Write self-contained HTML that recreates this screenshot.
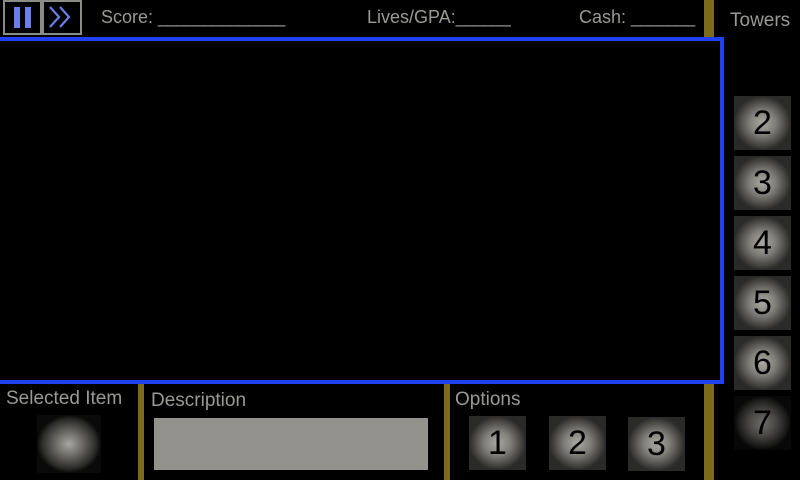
<!DOCTYPE html>
<html><head><style>
*{margin:0;padding:0;box-sizing:border-box}
body{width:800px;height:480px;background:#000;position:relative;overflow:hidden;font-family:"Liberation Sans","DejaVu Sans",sans-serif;color:#9a9994}
.a{position:absolute}
.t{position:absolute;font-size:18px;white-space:nowrap}
.gold{position:absolute;background:#7d6b1c}
.btn{position:absolute;width:57px;height:54px;background:radial-gradient(closest-side,#a9a8a2 0%,#807f7a 45%,#4a4946 80%,#2a2a28 100%),#1e1e1d;color:#000;font-size:34px;text-align:center;line-height:54px}
.btn::after{content:"";}
.dark{background:radial-gradient(closest-side,#6e6d69 0%,#4a4946 45%,#1c1c1b 85%,#080808 100%),#050505}
</style></head><body>
<div class="a" style="left:3px;top:0;width:39px;height:35px;border:2px solid #8a8a86"></div>
<div class="a" style="left:14px;top:7px;width:6px;height:21px;background:#6a80e8"></div>
<div class="a" style="left:25px;top:7px;width:6px;height:21px;background:#6a80e8"></div>
<div class="a" style="left:42px;top:0;width:40px;height:35px;border:2px solid #8a8a86"></div>
<svg class="a" style="left:42px;top:0" width="40" height="35"><path d="M8 7 L17 17 L8 27 M18 7 L27 17 L18 27" fill="none" stroke="#6a80e8" stroke-width="2.2"/></svg>
<div class="t" style="left:101px;top:7px">Score: <span style="letter-spacing:-1px">______________</span></div>
<div class="t" style="left:367px;top:7px">Lives/GPA:<span style="letter-spacing:-1px">______</span></div>
<div class="t" style="left:579px;top:7px">Cash: <span style="letter-spacing:-1px">_______</span></div>
<div class="gold" style="left:704px;top:0;width:10px;height:37px"></div>
<div class="t" style="left:730px;top:10px;font-size:19px">Towers</div>
<div class="a" style="left:-4px;top:37px;width:728px;height:347px;border:4px solid #2140f0;background:#000"></div>
<div class="btn" style="left:734px;top:96px">2</div>
<div class="btn" style="left:734px;top:156px">3</div>
<div class="btn" style="left:734px;top:216px">4</div>
<div class="btn" style="left:734px;top:276px">5</div>
<div class="btn" style="left:734px;top:336px">6</div>
<div class="btn dark" style="left:734px;top:396px">7</div>
<div class="t" style="left:6px;top:388px;font-size:19px">Selected Item</div>
<div class="a" style="left:37px;top:415px;width:64px;height:58px;background:radial-gradient(closest-side,#a7a6a0 0%,#6e6d68 40%,#2a2a28 85%,#0a0a0a 100%),#0a0a0a"></div>
<div class="gold" style="left:138px;top:384px;width:6px;height:96px"></div>
<div class="t" style="left:151px;top:390px;font-size:19px">Description</div>
<div class="a" style="left:154px;top:418px;width:274px;height:52px;background:#93928c"></div>
<div class="gold" style="left:444px;top:384px;width:6px;height:96px"></div>
<div class="t" style="left:455px;top:389px;font-size:19px">Options</div>
<div class="btn" style="left:469px;top:416px">1</div>
<div class="btn" style="left:549px;top:416px">2</div>
<div class="btn" style="left:628px;top:417px">3</div>
<div class="gold" style="left:704px;top:384px;width:10px;height:96px"></div>
</body></html>
